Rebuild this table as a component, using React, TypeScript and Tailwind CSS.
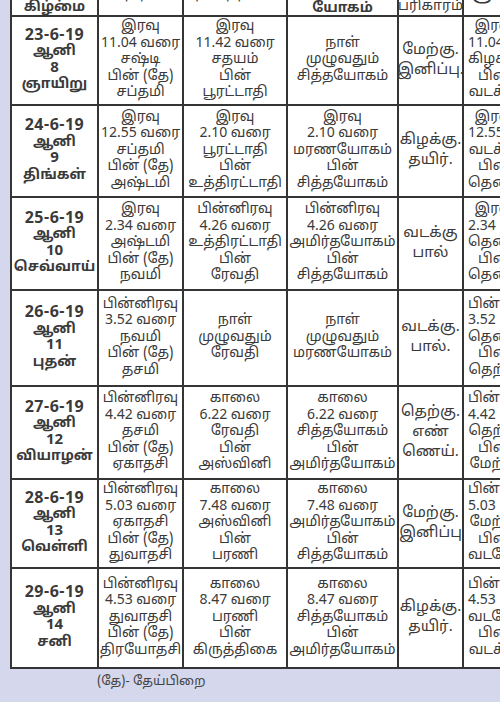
import React from "react";

interface DayRow {
  date: string;
  day: string;
  weekday: string;
  thithi: string[];
  star: string[];
  yogam: string[];
  pari: string[];
  extra: string[];
  h: string;
}

const rows: DayRow[] = [
  {
    date: "23-6-19", day: "8", weekday: "ஞாயிறு", h: "h-[89px]",
    thithi: ["இரவு", "11.04 வரை", "சஷ்டி", "பின் (தே)", "சப்தமி"],
    star: ["இரவு", "11.42 வரை", "சதயம்", "பின்", "பூரட்டாதி"],
    yogam: ["நாள்", "முழுவதும்", "சித்தயோகம்"],
    pari: ["மேற்கு.", "இனிப்பு."],
    extra: ["இரவு", "11.04 வரை", "கிழக்கு", "பின்", "வடக்கு"],
  },
  {
    date: "24-6-19", day: "9", weekday: "திங்கள்", h: "h-[92px]",
    thithi: ["இரவு", "12.55 வரை", "சப்தமி", "பின் (தே)", "அஷ்டமி"],
    star: ["இரவு", "2.10 வரை", "பூரட்டாதி", "பின்", "உத்திரட்டாதி"],
    yogam: ["இரவு", "2.10 வரை", "மரணயோகம்", "பின்", "சித்தயோகம்"],
    pari: ["கிழக்கு.", "தயிர்."],
    extra: ["இரவு", "12.55 வரை", "வடக்கு", "பின்", "தென்கிழக்கு"],
  },
  {
    date: "25-6-19", day: "10", weekday: "செவ்வாய்", h: "h-[93px]",
    thithi: ["இரவு", "2.34 வரை", "அஷ்டமி", "பின் (தே)", "நவமி"],
    star: ["பின்னிரவு", "4.26 வரை", "உத்திரட்டாதி", "பின்", "ரேவதி"],
    yogam: ["பின்னிரவு", "4.26 வரை", "அமிர்தயோகம்", "பின்", "சித்தயோகம்"],
    pari: ["வடக்கு", "பால்"],
    extra: ["இரவு", "2.34 வரை", "தென்கிழக்கு", "பின்", "தென்மேற்கு"],
  },
  {
    date: "26-6-19", day: "11", weekday: "புதன்", h: "h-[96px]",
    thithi: ["பின்னிரவு", "3.52 வரை", "நவமி", "பின் (தே)", "தசமி"],
    star: ["நாள்", "முழுவதும்", "ரேவதி"],
    yogam: ["நாள்", "முழுவதும்", "மரணயோகம்"],
    pari: ["வடக்கு.", "பால்."],
    extra: ["பின்னிரவு", "3.52 வரை", "தென்மேற்கு", "பின்", "தெற்கு"],
  },
  {
    date: "27-6-19", day: "12", weekday: "வியாழன்", h: "h-[93px]",
    thithi: ["பின்னிரவு", "4.42 வரை", "தசமி", "பின் (தே)", "ஏகாதசி"],
    star: ["காலை", "6.22 வரை", "ரேவதி", "பின்", "அஸ்வினி"],
    yogam: ["காலை", "6.22 வரை", "சித்தயோகம்", "பின்", "அமிர்தயோகம்"],
    pari: ["தெற்கு.", "எண்", "ணெய்."],
    extra: ["பின்னிரவு", "4.42 வரை", "தெற்கு", "பின்", "மேற்கு"],
  },
  {
    date: "28-6-19", day: "13", weekday: "வெள்ளி", h: "h-[89px]",
    thithi: ["பின்னிரவு", "5.03 வரை", "ஏகாதசி", "பின் (தே)", "துவாதசி"],
    star: ["காலை", "7.48 வரை", "அஸ்வினி", "பின்", "பரணி"],
    yogam: ["காலை", "7.48 வரை", "அமிர்தயோகம்", "பின்", "சித்தயோகம்"],
    pari: ["மேற்கு.", "இனிப்பு"],
    extra: ["பின்னிரவு", "5.03 வரை", "மேற்கு", "பின்", "வடமேற்கு"],
  },
  {
    date: "29-6-19", day: "14", weekday: "சனி", h: "h-[100px]",
    thithi: ["பின்னிரவு", "4.53 வரை", "துவாதசி", "பின் (தே)", "திரயோதசி"],
    star: ["காலை", "8.47 வரை", "பரணி", "பின்", "கிருத்திகை"],
    yogam: ["காலை", "8.47 வரை", "சித்தயோகம்", "பின்", "அமிர்தயோகம்"],
    pari: ["கிழக்கு.", "தயிர்."],
    extra: ["பின்னிரவு", "4.53 வரை", "வடமேற்கு", "பின்", "வடக்கு"],
  },
];

const cell = "border-r-2 border-b-2 border-[#353535] flex flex-col justify-center items-center text-center";

function Lines({ items }: { items: string[] }) {
  return (
    <>
      {items.map((t, i) => (
        <span key={i} className="whitespace-nowrap">{t}</span>
      ))}
    </>
  );
}

export default function App() {
  return (
    <div
      className="w-[500px] h-[702px] overflow-hidden bg-[#d5d7ed] text-[#3a3a3a] text-[14px] leading-[16.5px]"
      style={{ fontFamily: '"Noto Sans Tamil", "Lohit Tamil", "Noto Sans", "DejaVu Sans", sans-serif' }}
    >
      <div className="ml-[10px] mt-[-25px] w-[560px] bg-white border-l-2 border-t-2 border-[#353535] grid grid-cols-[87px_85px_104px_111px_65px_108px]">
        {/* header, top part is cut by the page edge */}
        <div className={cell + " h-[40px] !justify-end pb-[1px] font-bold"}>
          <span className="leading-[16px]">தேதி</span>
          <span className="leading-[12px]">கிழமை</span>
        </div>
        <div className={cell + " h-[40px] !justify-start pt-[9px]"}>திதி</div>
        <div className={cell + " h-[40px] !justify-start pt-[9px]"}>நட்சத்திரம்</div>
        <div className={cell + " h-[40px] !justify-end pb-[1px] font-bold leading-[10px]"}>யோகம்</div>
        <div className={cell + " h-[40px] !justify-end pb-[2px] leading-[12px]"}>பரிகாரம்</div>
        <div className={cell + " h-[40px] !justify-start pt-[11px] !items-start pl-[8px] font-bold"}>சூலம்</div>

        {rows.map((r) => (
          <React.Fragment key={r.date}>
            <div className={cell + " " + r.h + " font-bold"}>
              <span className="text-[16px] tracking-[0.5px]">{r.date}</span>
              <span>ஆனி</span>
              <span className="text-[15px]">{r.day}</span>
              <span>{r.weekday}</span>
            </div>
            <div className={cell + " " + r.h}><Lines items={r.thithi} /></div>
            <div className={cell + " " + r.h}><Lines items={r.star} /></div>
            <div className={cell + " " + r.h}><Lines items={r.yogam} /></div>
            <div className={cell + " " + r.h + " text-[15px] leading-[20px]"}><Lines items={r.pari} /></div>
            <div className={cell + " " + r.h + " !items-start pl-[4px]"}>
              <div className="w-[52px] text-center">
                {r.extra.map((t, i) => (
                  <div key={i} className="whitespace-nowrap">{t}</div>
                ))}
              </div>
            </div>
          </React.Fragment>
        ))}
      </div>
      <div className="ml-[97px] mt-[5px] text-[13px] text-[#444]">(தே)- தேய்பிறை</div>
    </div>
  );
}
